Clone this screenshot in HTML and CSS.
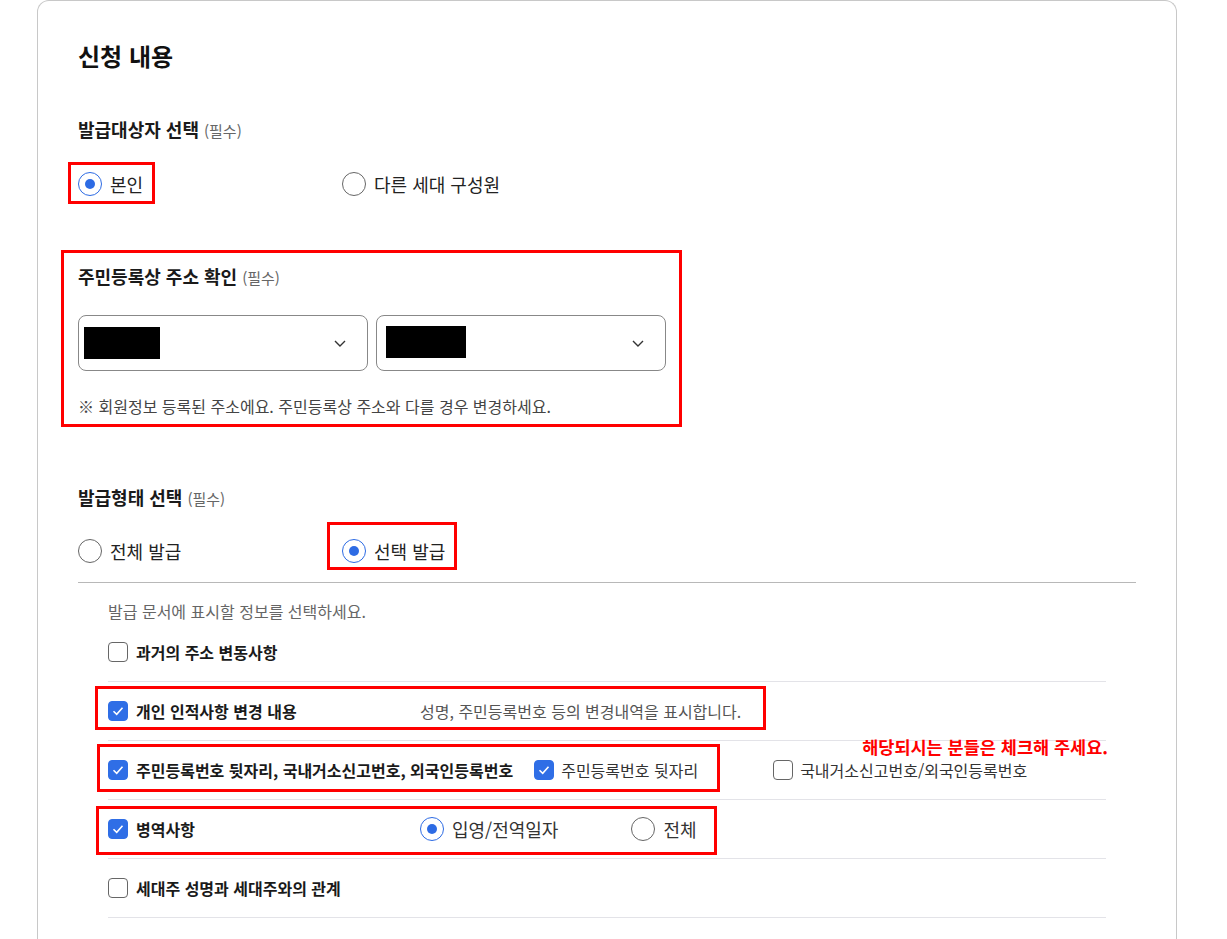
FILE: index.html
```html
<!DOCTYPE html>
<html lang="ko">
<head>
    <meta charset="UTF-8">
    <meta name="viewport" content="width=device-width, initial-scale=1.0">
    <title>신청 내용</title>
    <link rel="stylesheet" href="styles.css">
</head>
<body>

<div class="card">
    <h2 class="card-title">신청 내용</h2>

    <!-- 발급대상자 -->
    <div class="field">
        <div class="field-label">발급대상자 선택 <span class="req">(필수)</span></div>
        <div class="radio-group">
            <label class="radio-item mark mark-self"><span class="radio is-checked"></span>본인</label>
            <label class="radio-item"><span class="radio"></span>다른 세대 구성원</label>
        </div>
    </div>

    <!-- 주소 확인 -->
    <div class="field address mark">
        <div class="field-label">주민등록상 주소 확인 <span class="req">(필수)</span></div>
        <div class="select-row">
            <div class="select">
                <span class="masked masked-1"></span>
                <svg class="chevron" width="12" height="7" viewBox="0 0 12 7"><polyline points="1,1 6,6 11,1" fill="none" stroke="#333" stroke-width="1.4"/></svg>
            </div>
            <div class="select">
                <span class="masked masked-2"></span>
                <svg class="chevron" width="12" height="7" viewBox="0 0 12 7"><polyline points="1,1 6,6 11,1" fill="none" stroke="#333" stroke-width="1.4"/></svg>
            </div>
        </div>
        <p class="note">※ 회원정보 등록된 주소에요. 주민등록상 주소와 다를 경우 변경하세요.</p>
    </div>

    <!-- 발급형태 -->
    <div class="field issue-type">
        <div class="field-label">발급형태 선택 <span class="req">(필수)</span></div>
        <div class="radio-group">
            <label class="radio-item"><span class="radio"></span>전체 발급</label>
            <label class="radio-item mark mark-select"><span class="radio is-checked"></span>선택 발급</label>
        </div>
    </div>

    <div class="divider"></div>

    <div class="options">
        <p class="options-desc">발급 문서에 표시할 정보를 선택하세요.</p>

        <div class="row">
            <div class="row-inner">
                <label class="row-label"><span class="check"></span>과거의 주소 변동사항</label>
            </div>
        </div>

        <div class="row">
            <div class="row-inner mark mark-row2">
                <label class="row-label"><span class="check is-checked"><svg width="20" height="20" viewBox="0 0 20 20"><polyline points="5.5,10.2 8.7,13.3 14.5,6.8" fill="none" stroke="#fff" stroke-width="1.6"/></svg></span>개인 인적사항 변경 내용</label>
                <span class="row-desc">성명, 주민등록번호 등의 변경내역을 표시합니다.</span>
            </div>
        </div>

        <div class="row row-notice">
            <div class="row-inner mark mark-row3">
                <label class="row-label wide"><span class="check is-checked"><svg width="20" height="20" viewBox="0 0 20 20"><polyline points="5.5,10.2 8.7,13.3 14.5,6.8" fill="none" stroke="#fff" stroke-width="1.6"/></svg></span>주민등록번호 뒷자리, 국내거소신고번호, 외국인등록번호</label>
                <label class="opt"><span class="check is-checked"><svg width="20" height="20" viewBox="0 0 20 20"><polyline points="5.5,10.2 8.7,13.3 14.5,6.8" fill="none" stroke="#fff" stroke-width="1.6"/></svg></span>주민등록번호 뒷자리</label>
            </div>
            <label class="opt opt-far"><span class="check"></span>국내거소신고번호/외국인등록번호</label>
            <span class="notice">해당되시는 분들은 체크해 주세요.</span>
        </div>

        <div class="row">
            <div class="row-inner mark mark-row4">
                <label class="row-label"><span class="check is-checked"><svg width="20" height="20" viewBox="0 0 20 20"><polyline points="5.5,10.2 8.7,13.3 14.5,6.8" fill="none" stroke="#fff" stroke-width="1.6"/></svg></span>병역사항</label>
                <label class="opt opt-radio"><span class="radio is-checked"></span>입영/전역일자</label>
                <label class="opt opt-radio"><span class="radio"></span>전체</label>
            </div>
        </div>

        <div class="row">
            <div class="row-inner">
                <label class="row-label"><span class="check"></span>세대주 성명과 세대주와의 관계</label>
            </div>
        </div>
    </div>
</div>

</body>
</html>
```

FILE: styles.css
```css
body {
    margin: 0;
    background-color: #fff;
    font-family: "Noto Sans CJK KR", "Noto Sans", sans-serif;
    color: #222;
}

.card {
    box-sizing: border-box;
    width: 1140px;
    margin-left: 37px;
    padding: 38px 40px 40px;
    border: 1px solid #c8c8c8;
    border-bottom: none;
    border-radius: 12px 12px 0 0;
    background-color: #fff;
}

.card-title {
    margin: 0;
    font-size: 24px;
    line-height: 34px;
    font-weight: 700;
    color: #111;
}

.field {
    margin-top: 44px;
}

.field-label {
    font-size: 18px;
    line-height: 24px;
    font-weight: 700;
    color: #1a1a1a;
}

.req {
    font-size: 15px;
    font-weight: 400;
    color: #666;
}

.radio-group {
    display: grid;
    grid-template-columns: 264px 264px;
    margin-top: 29px;
}

.radio-item {
    justify-self: start;
    display: flex;
    align-items: center;
    gap: 8px;
    height: 24px;
    font-size: 18px;
    line-height: 24px;
    color: #222;
}

.radio {
    box-sizing: border-box;
    flex: none;
    width: 24px;
    height: 24px;
    border: 1.5px solid #666;
    border-radius: 50%;
    position: relative;
    background-color: #fff;
}

.radio.is-checked {
    border-color: #2d6be4;
}

.radio.is-checked::after {
    content: '';
    position: absolute;
    left: 50%;
    top: 50%;
    width: 10px;
    height: 10px;
    margin: -5px 0 0 -5px;
    border-radius: 50%;
    background-color: #2d6be4;
}

/* red annotation boxes */
.mark {
    border: 3px solid #f00;
}

.mark-self {
    padding: 7px 9px 5px 7px;
    margin: -10px -12px -8px -10px;
}

.mark-select {
    padding: 14px 9px 4px 12px;
    margin: -17px -12px -7px -15px;
}

.address {
    width: fit-content;
    margin-top: 54px;
    margin-left: -17px;
    padding: 11px 13px 7px 14px;
}

.select-row {
    display: flex;
    gap: 8px;
    margin-top: 25px;
}

.select {
    box-sizing: border-box;
    display: flex;
    align-items: center;
    justify-content: space-between;
    width: 290px;
    height: 56px;
    padding: 0 21px 0 5px;
    border: 1px solid #888;
    border-radius: 8px;
}

.masked {
    display: block;
    height: 32px;
    background-color: #000;
}

.masked-1 {
    width: 76px;
}

.masked-2 {
    width: 80px;
    margin-left: 4px;
    margin-top: -3px;
}

.note {
    margin: 24px 0 0;
    font-size: 16px;
    line-height: 22px;
    color: #444;
}

.issue-type {
    margin-top: 58px;
}

.issue-type .radio-group {
    margin-top: 28px;
}

.divider {
    margin-top: 19px;
    border-top: 1px solid #b8b8b8;
}

.options {
    padding: 0 30px;
}

.options-desc {
    margin: 17px 0 1px;
    font-size: 16px;
    line-height: 22px;
    color: #666;
}

.row {
    display: flex;
    align-items: center;
    height: 58px;
    border-bottom: 1px solid #e3e3e8;
}

.row-notice {
    position: relative;
}

.row-inner {
    display: flex;
    align-items: center;
    height: 24px;
}

.row-label {
    display: flex;
    align-items: center;
    gap: 8px;
    min-width: 312px;
    font-size: 16px;
    line-height: 24px;
    font-weight: 700;
    color: #1a1a1a;
}

.row-label.wide {
    padding-right: 21px;
}

.row-desc {
    font-size: 16px;
    line-height: 24px;
    color: #555;
}

.check {
    box-sizing: border-box;
    flex: none;
    display: block;
    width: 20px;
    height: 20px;
    border: 1.5px solid #666;
    border-radius: 4px;
    background-color: #fff;
}

.check svg {
    display: block;
    margin: -1.5px;
}

.check.is-checked {
    border-color: #2f6ee6;
    background-color: #2f6ee6;
}

.opt {
    display: flex;
    align-items: center;
    gap: 7px;
    font-size: 16px;
    line-height: 24px;
    color: #333;
}

.opt + .opt {
    margin-left: 73px;
}

.opt-radio {
    gap: 8px;
    font-size: 18px;
}

.opt-far {
    margin-left: 75px;
}

.mark-row2 {
    padding: 10px 22px 4px 10px;
    margin: -13px -25px -7px -13px;
}

.mark-row3 {
    padding: 11px 19px 7px 8px;
    margin: -14px -22px -10px -11px;
}

.mark-row4 {
    padding: 8px 17px 11px 9px;
    margin: -11px -20px -14px -12px;
}

.notice {
    position: absolute;
    right: -2px;
    top: -5px;
    font-size: 17.5px;
    line-height: 22px;
    font-weight: 700;
    color: #f00;
}
```
